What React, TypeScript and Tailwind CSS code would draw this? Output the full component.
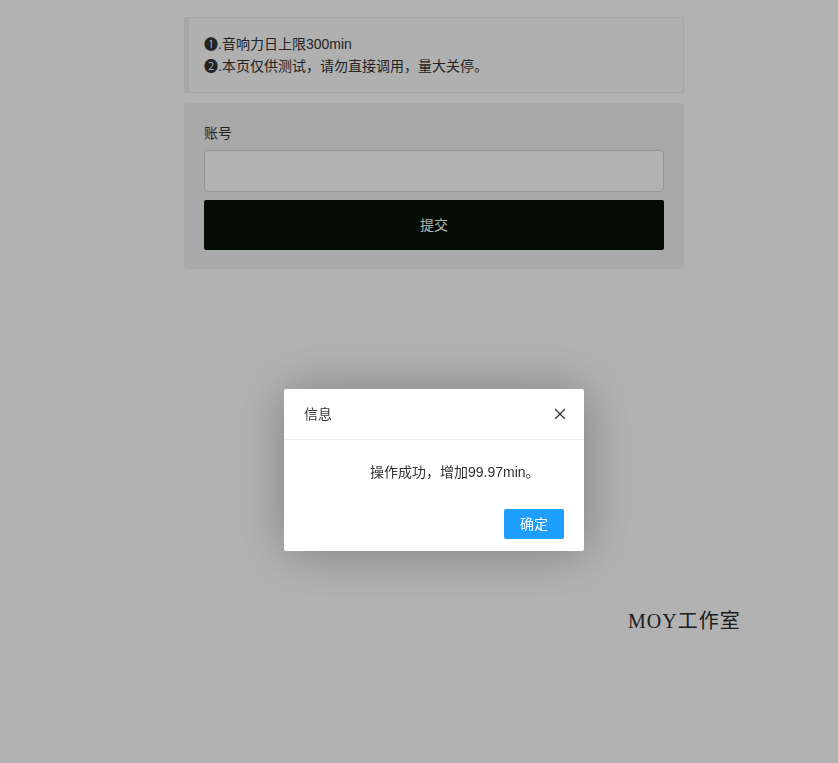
import { X } from 'lucide-react';

const sans = { fontFamily: '"Liberation Sans", "Noto Sans CJK SC", sans-serif' };

const Notice = () => (
  <div className="border border-[#eeeeee] border-l-[5px] bg-[#fcfcfc] p-[15px] text-[14px] leading-[22px] text-[#333]">
    <p>❶.音响力日上限300min</p>
    <p>❷.本页仅供测试，请勿直接调用，量大关停。</p>
  </div>
);

const AccountForm = () => (
  <div className="mt-[10px] rounded-[4px] bg-[#f3f3f3] px-[20px] pt-[20px] pb-[19px]">
    <label className="block text-[14px] leading-[20px] text-[#333] mb-[7px]">账号</label>
    <input className="block h-[42px] w-full rounded-[4px] border border-[#d6d6d6] bg-white px-3 text-[14px] outline-none" />
    <button className="mt-[8px] block h-[50px] w-full rounded-[2px] bg-[#071407] text-[14px] text-white">提交</button>
  </div>
);

const Dialog = () => (
  <div className="fixed left-[284px] top-[389px] w-[300px] rounded-[2px] bg-white shadow-[1px_1px_50px_rgba(0,0,0,0.3)]">
    <div className="flex h-[51px] items-center justify-between border-b border-[#eeeeee] pl-[20px] pr-[15px]">
      <span className="text-[14px] text-[#333]">信息</span>
      <X className="h-[18px] w-[18px] text-[#333]" strokeWidth={1.7} />
    </div>
    <div className="py-[20px] pl-[86px] pr-[20px] text-[14px] leading-[24px] text-[#333]">
      操作成功，增加99.97min。
    </div>
    <div className="flex justify-end px-[15px] pb-[12px]">
      <button className="mx-[5px] mt-[5px] h-[30px] rounded-[2px] bg-[#1e9fff] px-[16px] text-[14px] text-white">确定</button>
    </div>
  </div>
);

export default function App() {
  return (
    <div className="min-h-screen bg-white" style={sans}>
      <div className="ml-[184px] w-[500px] pt-[17px]">
        <Notice />
        <AccountForm />
      </div>
      <div
        className="mt-[338px] pl-[628px] text-[20px] leading-[28px] tracking-[1px] text-[#2a2a2a]"
        style={{ fontFamily: '"Liberation Serif", "Noto Sans CJK SC", serif' }}
      >
        MOY工作室
      </div>

      {/* layer shade + dialog */}
      <div className="fixed inset-0 bg-black/30" />
      <Dialog />
    </div>
  );
}
